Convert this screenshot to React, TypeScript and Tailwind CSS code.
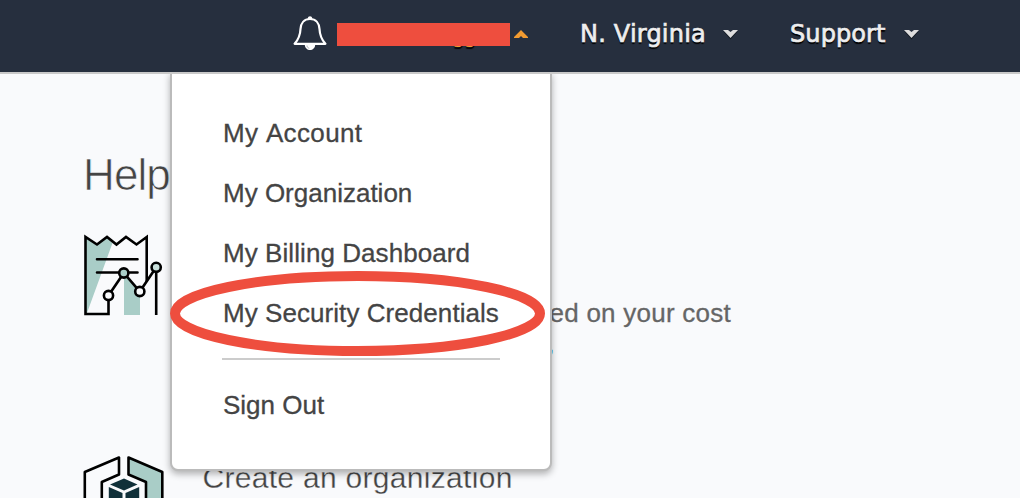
const menuItems = [
  { label: 'My Account', spacing: 'tracking-[0.35px] [font-kerning:none]' },
  { label: 'My Organization', spacing: 'tracking-[0px]' },
  { label: 'My Billing Dashboard', spacing: 'tracking-[0.07px]' },
  { label: 'My Security Credentials', spacing: 'tracking-[0.06px]' },
];

function BellIcon() {
  return (
    <svg className="block" width="34" height="36" viewBox="0 0 34 36" fill="none">
      <path d="M17 3C11 3 7.8 7.3 7.5 13C7.2 20 5.5 23.5 1.6 27.8H32.4C28.5 23.5 26.8 20 26.5 13C26.2 7.3 23 3 17 3Z" stroke="#fff" strokeWidth="2.2" strokeLinejoin="round" />
      <path d="M14.8 3V2.3C14.8 -.4 19.2 -.4 19.2 2.3V3Z" fill="#fff" />
      <path d="M11.8 28.5H22.2C22.2 35.8 11.8 35.8 11.8 28.5Z" fill="#fff" />
      <path d="M14 29.5C14 31 15 32 16.3 32.3" stroke="#8b929d" strokeWidth=".7" />
    </svg>
  );
}

function Caret() {
  return (
    <svg className="mt-[1px] block" width="15" height="10" viewBox="0 0 15 10">
      <path d="M0 1L4 3L7.5 5L11 3L15 1L7.5 9.5Z" fill="#111821" />
      <path d="M0 0H5L7.5 2L10 0H15L7.5 8Z" fill="#ddd" />
    </svg>
  );
}

function BillingIcon() {
  return (
    <svg className="ml-[0.5px] block" width="80" height="84" viewBox="0 0 80 84" fill="none" stroke="#000" strokeWidth="2.6">
      <path d="M1.5 3L13 10.5L22 3L28.5 9L3 79H1.5Z" fill="#a9cdc7" stroke="none" />
      <path d="M40 40L56 55V81H40Z" fill="#a9cdc7" stroke="none" />
      <path d="M24.5 66V80H1.5V3L13 10.5L23 3L32.5 10.5L42 3L52.5 10.5L62.7 3V48" />
      <path d="M13 25.2H53.5M13 38.5H53.5" strokeLinecap="round" />
      <path d="M24.5 61.5L39.8 39L55.8 57.5L72.2 33.3M72.2 36V81" />
      <circle cx="24.5" cy="61.5" r="4.6" fill="#f9fafc" />
      <circle cx="39.8" cy="39" r="4.6" fill="#a9cdc7" />
      <circle cx="55.8" cy="57.5" r="4.6" fill="#f9fafc" />
      <circle cx="72.2" cy="33.3" r="4.6" fill="#c8dfdb" />
    </svg>
  );
}

function OrganizationIcon() {
  return (
    <svg className="block" width="82" height="43" viewBox="0 0 82 43" fill="none" stroke="#000" strokeWidth="2.6" strokeLinejoin="round">
      <path d="M1.8 50V17L36 2.5V19.5L18.8 27V50" />
      <path d="M45.5 2.5L79.3 17V50H63V27L45.5 19.5Z" fill="#a9cdc7" />
      <path d="M27 26.5L41 20.5L54.5 26.5L41 32.5Z" fill="#103039" stroke="none" transform="translate(0 3)" />
      <path d="M25.8 32L39.5 38V44H25.8ZM56.2 32L42.5 38V44H56.2Z" fill="#103039" stroke="none" />
    </svg>
  );
}

function AccountMenu() {
  return (
    <div className="absolute left-[170px] top-[72px] z-10 h-[399px] w-[382px] rounded-b-[8px] border-2 border-[#bbb] bg-white px-[50px] pt-[29px] shadow-[0_3px_7px_rgba(0,0,0,0.3)]">
      <nav className="flex flex-col text-[26px] text-[#444] [-webkit-text-stroke:0.3px_#444]">
        {menuItems.map((item) => (
          <a key={item.label} className={`flex h-[60px] items-center whitespace-nowrap pl-[1px] ${item.spacing}`}>{item.label}</a>
        ))}
        <hr className="mt-[15px] w-[278px] border-t-2 border-[#ccc]" />
        <a className="mt-[15px] flex h-[60px] items-center pl-[1px]">Sign Out</a>
      </nav>
    </div>
  );
}

export default function App() {
  return (
    <div className="relative h-[498px] w-[1020px] overflow-hidden bg-[#f9fafc] font-['Liberation_Sans',Arial,sans-serif]">
      <header className="relative z-20 flex h-[74px] border-b-2 border-[#c9c9c9] bg-[#262f3e] font-['DejaVu_Sans',sans-serif] text-[24px] text-[#eee]">
        <div className="ml-[293px] mt-4 w-11">
          <BellIcon />
        </div>
        <div className="relative mt-[23px] h-[23px] w-[173px]">
          <span className="absolute left-[115px] top-[-4px] text-[20px] leading-[34px] tracking-[-1px] text-[#f29b31] [text-shadow:0_2px_1px_#000]">gg</span>
          <div className="absolute inset-0 bg-[#ee4e3e]" />
        </div>
        <svg className="ml-1 mt-[30px] block" width="14" height="8" viewBox="0 0 14 8">
          <path d="M0 8V7L7 0L14 7V8H9L7 6L5 8Z" fill="#f29b31" />
        </svg>
        <div className="ml-[52px] mt-4 flex h-9 w-[210px] items-center">
          <span className="w-[143px] whitespace-nowrap tracking-[0.2px] [-webkit-text-stroke:0.7px_#eee] [text-shadow:0_2px_1px_#000]">N. Virginia</span>
          <Caret />
        </div>
        <div className="mt-4 flex h-9 items-center">
          <span className="w-[114px] tracking-[0.1px] [-webkit-text-stroke:0.7px_#eee] [text-shadow:0_2px_1px_#000]">Support</span>
          <Caret />
        </div>
      </header>
      <AccountMenu />
      <main className="pl-[83px] text-[#444]">
        <h1 className="pt-[76px] text-[44px] leading-[50px] tracking-[-0.9px] [-webkit-text-stroke:0.7px_#f9fafc]">Help</h1>
        <section className="mt-[34px] flex h-[221px]">
          <BillingIcon />
          <div className="ml-[386px] pt-[64px] text-[26px] leading-[30px] text-[#666]">
            <p className="tracking-[0.25px] [-webkit-text-stroke:0.3px_#666]">ed on your cost</p>
            <p className="mt-[6px] text-[20px] leading-[20px] text-[#146eb4]"><span className="relative left-[-1px] top-[1px]">,</span></p>
          </div>
        </section>
        <section className="flex h-[43px]">
          <OrganizationIcon />
          <h2 className="ml-[37.5px] mt-[6px] whitespace-nowrap text-[30px] leading-[34px] tracking-[0.3px] [-webkit-text-stroke:0.3px_#f9fafc]">Create an organization</h2>
        </section>
      </main>
      <svg className="absolute left-[168px] top-[268px] z-30" width="380" height="92" viewBox="0 0 380 92" fill="none">
        <ellipse cx="189.5" cy="45.5" rx="182.5" ry="37.5" stroke="#ee4e3e" strokeWidth="10" />
      </svg>
    </div>
  );
}
